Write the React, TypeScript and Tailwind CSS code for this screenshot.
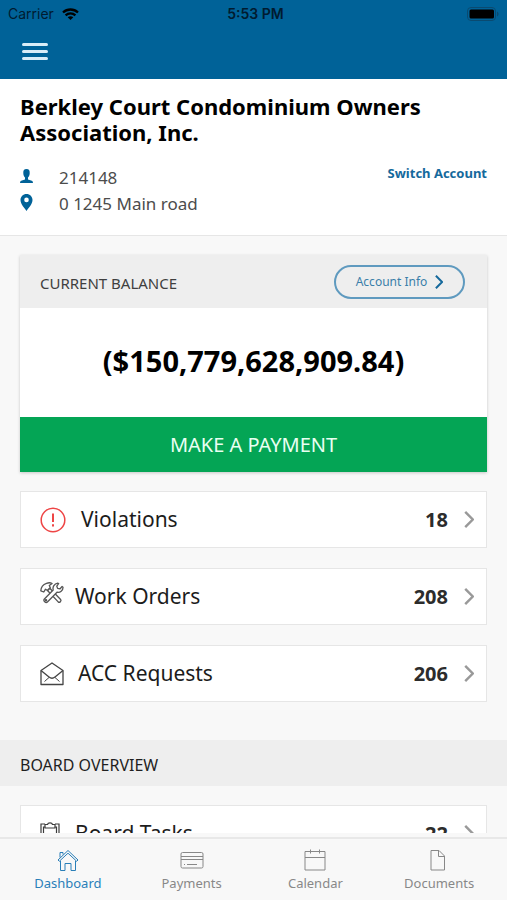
import type { ReactNode } from 'react'

type Row = { label: string; count: number; icon: ReactNode; gap: string }

function ViolationIcon() {
  return (
    <svg width="26" height="26" viewBox="0 0 26 26" fill="none" stroke="#ee4545" strokeWidth="1.5">
      <circle cx="13" cy="13" r="11.8" />
      <path d="M13 6.5v8.5" strokeWidth="2" />
      <path d="M13 17.2v2.3" strokeWidth="2" />
    </svg>
  )
}

function ToolsIcon() {
  return (
    <svg className="mb-2" width="24" height="22" viewBox="0 0 24 22" fill="none" stroke="#555" strokeWidth="1.3" strokeLinejoin="round">
      {/* ハンマー */}
      <path d="M7.500 8.500l2.300-2.300L20.600 17.500c1.200 1.400-1 3.600-2.400 2.400z" />
      <path d="M.8 8.800C1 5.500 3.500 2.300 6.500 1.300c2-.7 4.300-.6 5.600.2L9.300 3.600l1 2.200-2.800 2.700-2-1.300L3.800 10z" />
      {/* レンチ */}
      <path d="M13.200 8c-.8-3 1-6.200 4.500-6.800l1 .3-1.900 2.700.8 2.200 2.500.4 2-2.300.9.700c.2 3.500-3 5.800-6 5L7.400 20c-1.600 1.600-4.600-1.200-3-3z" fill="#fff" />
      <circle cx="6" cy="18.200" r=".6" />
    </svg>
  )
}

function EnvelopeIcon() {
  return (
    <svg width="24" height="24" viewBox="0 0 24 24" fill="none" stroke="#444" strokeWidth="1.300" strokeLinejoin="round">
      <path d="M1 8.500L12 1l11 7.500V22.500H1z" />
      <path d="M1 8.500l8 6.500c2 1.700 4 1.700 6 0l8-6.500" />
      <path d="M4.500 19.500l4.500-4M19.500 19.500l-4.500-4" strokeWidth="1" />
    </svg>
  )
}

function ClipboardIcon() {
  return (
    <svg width="20" height="24" viewBox="0 0 20 24" fill="none" stroke="#3c3c3c" strokeWidth="1.200">
      <path d="M5 2H1v21h18V2h-4" />
      <path d="M5 5H3.500v15.500h13V5H15" />
      <path d="M5 6V2.500h2.500C8 .3 12 .3 12.500 2.500H15V6z" />
    </svg>
  )
}

function ChevronRight({ className }: { className: string }) {
  return (
    <svg className={className} viewBox="0 0 10 18" fill="none" stroke="currentColor" strokeWidth="2.600">
      <path d="M1 1l8 8-8 8" />
    </svg>
  )
}

const rows: Row[] = [
  { label: 'Violations', count: 18, icon: <ViolationIcon />, gap: 'gap-[15px]' },
  { label: 'Work Orders', count: 208, icon: <ToolsIcon />, gap: 'gap-[11px]' },
  { label: 'ACC Requests', count: 206, icon: <EnvelopeIcon />, gap: 'gap-[14px]' },
]

const boardRows: Row[] = [
  { label: 'Board Tasks', count: 22, icon: <ClipboardIcon />, gap: 'gap-[15px]' },
]

const tabs = [
  {
    label: 'Dashboard',
    active: true,
    icon: (
      <>
        <path d="M1 11L11 1.500 21 11l-1.300 1.300L11 4.200l-8.700 8.100z" />
        <path d="M3.500 12v9.500H8v-7h6v7h4.500V12M3 8.500V3.500h3v2" />
      </>
    ),
  },
  {
    label: 'Payments',
    active: false,
    icon: (
      <>
        <rect x="0" y="3.500" width="22" height="15.500" rx="1.500" />
        <path d="M0 7.500h22M0 10.500h22M3 15.500h1M6 15.500h10" />
      </>
    ),
  },
  {
    label: 'Calendar',
    active: false,
    icon: (
      <>
        <path d="M1 2.500h20v18.500H1zM1 8.500h20" />
        <path d="M6.500.5v4M15.500.5v4" />
      </>
    ),
  },
  {
    label: 'Documents',
    active: false,
    icon: (
      <>
        <path d="M3 1.500h8l5.500 5.500v14H3z" />
        <path d="M10.500 1.500V7.500h6" />
      </>
    ),
  },
]

function RowCard({ row }: { row: Row }) {
  return (
    <a
      href="#"
      className="flex h-[57px] items-center border border-[#e6e6e6] bg-white pr-3 pl-[19px]"
    >
      <span className={`flex items-center ${row.gap}`}>
        {row.icon}
        <span className="pb-0.5 text-[21px] leading-7 text-[#1c1c1c]">{row.label}</span>
      </span>
      <span className="ml-auto text-xl font-bold text-[#2c2c2c]">{row.count}</span>
      <ChevronRight className="ml-4 h-[17px] w-[10px] text-[#999]" />
    </a>
  )
}

export default function App() {
  return (
    <div className="flex h-screen flex-col bg-[#f8f8f8] font-['Noto_Sans',sans-serif] text-black">
      {/* ヘッダー */}
      <header className="h-[79px] shrink-0 bg-[#006298]">
        <div className="grid h-7 grid-cols-3 items-center px-2 font-['Inter',sans-serif] text-sm text-[#001b30]">
          <span className="flex items-center gap-2">
            Carrier
            <svg width="17" height="12" viewBox="0 0 17 12" fill="none" stroke="#000" strokeWidth="2.300">
              <path d="M1 4.500c4.300-4 10.700-4 15 0M3.600 7.300c2.800-2.700 7-2.700 9.800 0" />
              <path d="M8.500 12L5.700 9.200c1.600-1.400 4-1.400 5.600 0z" fill="#000" stroke="none" />
            </svg>
          </span>
          <span className="pl-1 text-center font-semibold">5:53 PM</span>
          <svg className="justify-self-end" width="32" height="14" viewBox="0 0 32 14">
            <rect x=".5" y=".5" width="28" height="13" rx="3.500" fill="none" stroke="#0a4a70" />
            <rect x="2.500" y="2.500" width="24.500" height="9" rx="1.500" />
            <path d="M30 4.500c2 .8 2 4.200 0 5z" fill="#0a4a70" />
          </svg>
        </div>
        <button type="button" aria-label="Menu" className="mt-[15px] ml-[22px] flex w-[26px] flex-col gap-1">
          <span className="h-[3px] w-full rounded-xs bg-[#d9edf8]" />
          <span className="h-[3px] w-full rounded-xs bg-[#d9edf8]" />
          <span className="h-[3px] w-full rounded-xs bg-[#d9edf8]" />
        </button>
      </header>

      <main className="min-h-0 flex-1 overflow-y-auto [scrollbar-width:none]">
        {/* アカウント情報 */}
        <section className="border-b border-[#e6e6e6] bg-white px-5 pt-[14px] pb-[18px]">
          <h1 className="text-[22px] leading-[26px] font-bold">
            Berkley Court Condominium Owners Association, Inc.
          </h1>
          <div className="mt-5 flex items-start justify-between">
            <ul className="text-[17px] leading-[26px] text-[#4c4c4c]">
              <li className="flex items-center">
                <svg className="mr-[26px] mb-1" width="13" height="14" viewBox="0 0 13 14" fill="#006298">
                  <path d="M6.500 0C9 0 9.800 1.500 9.700 4c0 2-.8 3.700-1.700 4.500v2l3.800 1.200c.8.3 1 .8 1.200 2.300H0c.2-1.500.4-2 1.200-2.300L5 10.500v-2C4.100 7.700 3.300 6 3.300 4 3.200 1.500 4 0 6.500 0z" />
                </svg>
                214148
              </li>
              <li className="flex items-center">
                <svg className="mr-[26px] mb-1" width="13" height="17" viewBox="0 0 13 17" fill="#006298">
                  <path fillRule="evenodd" d="M6.500 0C10 0 12.500 2.700 12.500 6c0 4-4 8-6 11-2-3-6-7-6-11C.5 2.700 3 0 6.500 0zm0 3.600a2.300 2.300 0 100 4.600 2.300 2.300 0 000-4.600z" />
                </svg>
                0 1245 Main road
              </li>
            </ul>
            <a href="#" className="text-[13px] leading-4 font-bold text-[#15699c]">
              Switch Account
            </a>
          </div>
        </section>

        {/* 残高カード */}
        <section className="mx-5 mt-[19px] shadow-[0_1px_3px_rgba(0,0,0,0.2)]">
          <div className="flex h-[53px] items-center justify-between bg-[#eee] pr-[22px] pl-5">
            <h2 className="pt-1 text-[15px] text-[#3f3f3f]">CURRENT BALANCE</h2>
            <button
              type="button"
              className="flex h-[34px] w-[131px] items-center justify-center gap-2 rounded-full border-2 border-[#5f9abf] text-xs text-[#3a7ea9]"
            >
              Account Info
              <ChevronRight className="h-[14px] w-2 text-[#15699c]" />
            </button>
          </div>
          <p className="flex h-[109px] items-center justify-center bg-white pb-1 text-[29px] font-bold">
            ($150,779,628,909.84)
          </p>
          <button type="button" className="h-[55px] w-full bg-[#04a555] text-xl text-[#e9fff2]">
            MAKE A PAYMENT
          </button>
        </section>

        <div className="mx-5 mt-[19px] flex flex-col gap-5">
          {rows.map((row) => (
            <RowCard key={row.label} row={row} />
          ))}
        </div>

        <h2 className="mt-[38px] flex h-[46px] items-center bg-[#eee] px-5 pt-1 text-base text-[#1f1f1f]">
          BOARD OVERVIEW
        </h2>
        <div className="mx-5 mt-[19px] mb-5 flex flex-col gap-5">
          {boardRows.map((row) => (
            <RowCard key={row.label} row={row} />
          ))}
        </div>
      </main>

      {/* タブバー */}
      <nav className="mt-1 grid h-[63px] shrink-0 grid-cols-4 border-t-2 border-[#e8e8e8] px-[6px]">
        {tabs.map((tab) => (
          <a
            key={tab.label}
            href="#"
            className={`flex flex-col items-center gap-0.5 pt-[10px] text-[13px] leading-5 ${tab.active ? 'text-[#2a7fb8]' : 'text-[#888]'}`}
          >
            <svg width="22" height="22" viewBox="0 0 22 22" fill="none" stroke="currentColor" strokeWidth="1" overflow="visible">
              {tab.icon}
            </svg>
            {tab.label}
          </a>
        ))}
      </nav>
    </div>
  )
}
